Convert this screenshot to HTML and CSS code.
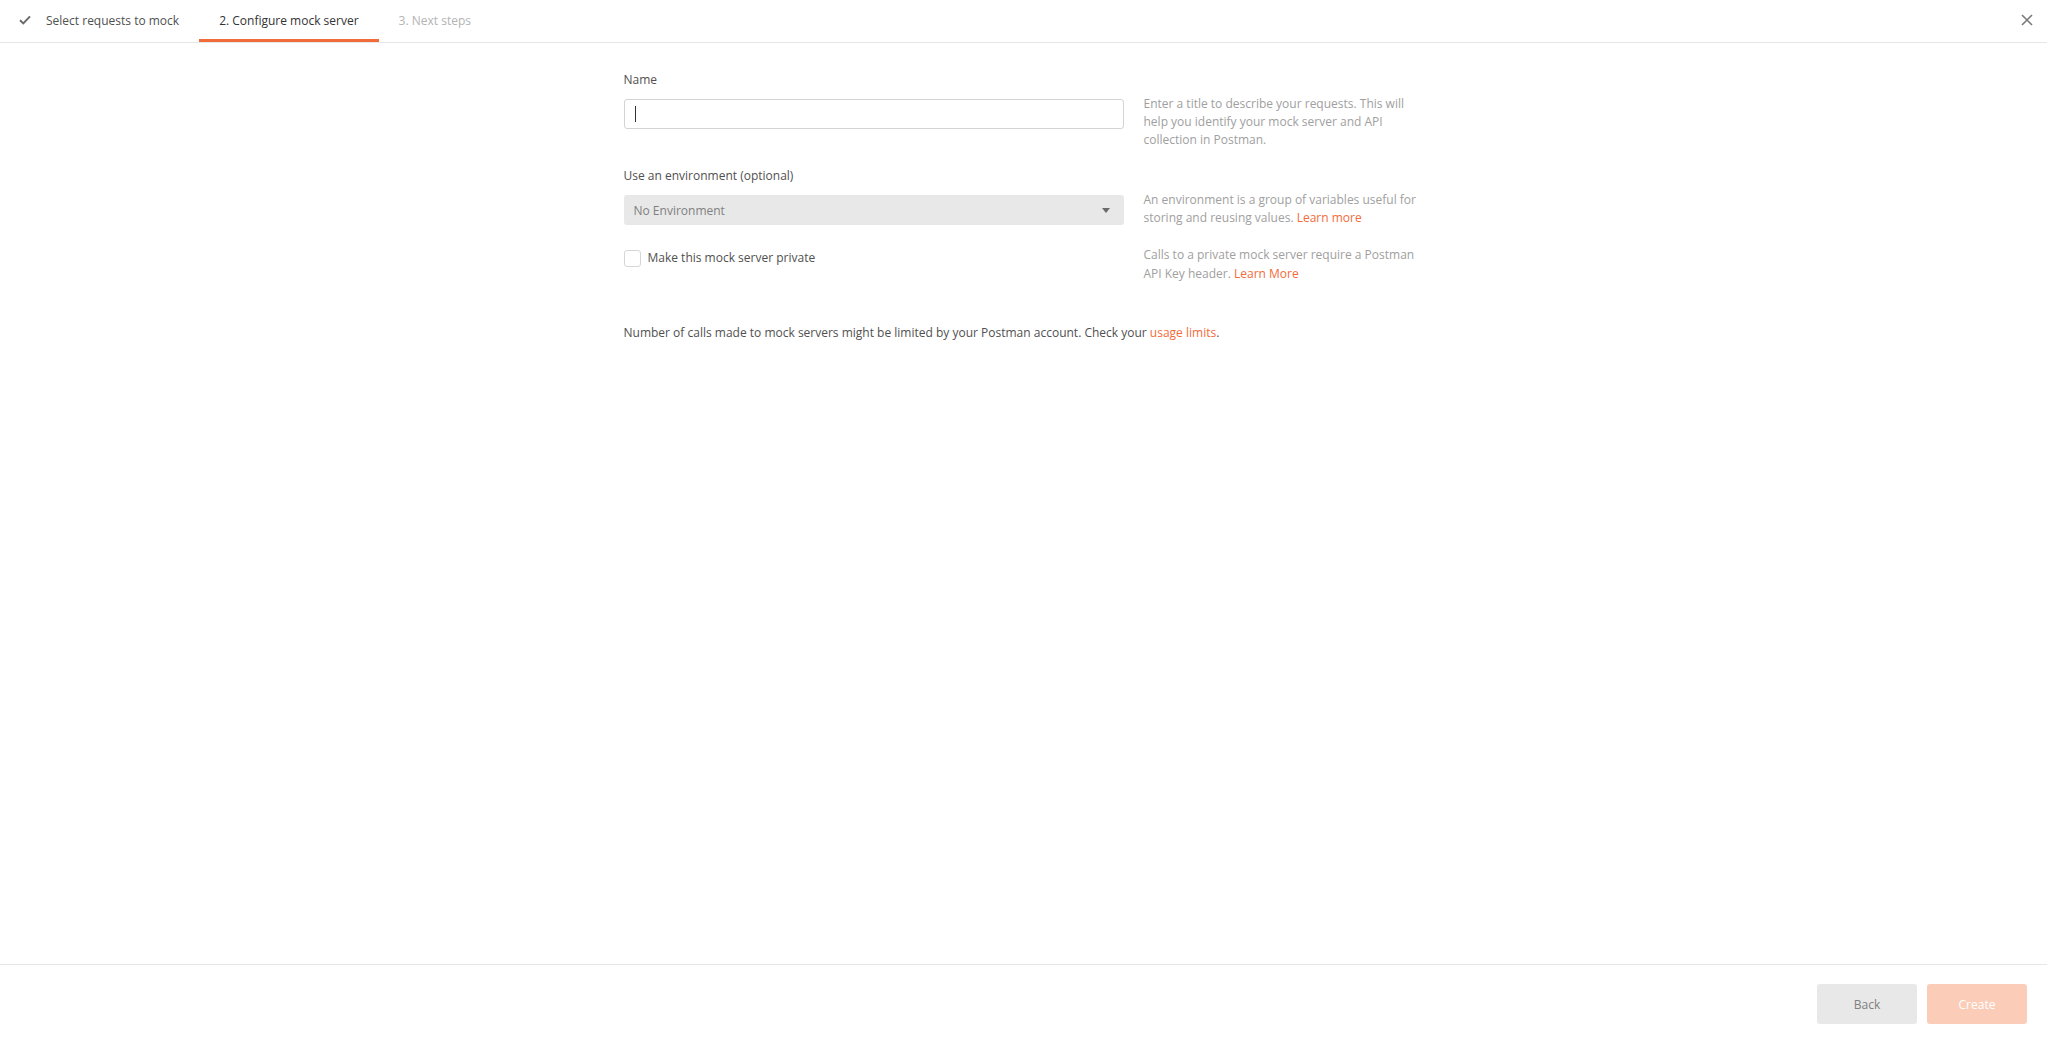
FILE: index.html
```html
<!DOCTYPE html>
<html lang="en">
<head>
<meta charset="utf-8">
<title>Create mock server</title>
<link rel="stylesheet" href="styles.css">
</head>
<body>
<div class="app">
  <header class="header">
    <nav class="tabs">
      <div class="tab tab-done">
        <svg class="check" width="12" height="10" viewBox="0 0 12 10"><path d="M1 5.2 L4.3 8.4 L11 1.4" fill="none" stroke="#6b6b6b" stroke-width="2"/></svg>
        <span>Select requests to mock</span>
      </div>
      <div class="tab tab-active"><span>2. Configure mock server</span></div>
      <div class="tab tab-next"><span>3. Next steps</span></div>
    </nav>
    <button class="close" aria-label="Close">
      <svg width="12" height="12" viewBox="0 0 12 12"><path d="M1 1 L11 11 M11 1 L1 11" stroke="#7a7a7a" stroke-width="1.6" fill="none"/></svg>
    </button>
  </header>

  <main class="main">
    <div class="form">
      <div class="field">
        <div class="label">Name</div>
        <div class="row">
          <div class="control">
            <div class="text-input"><span class="caret"></span></div>
          </div>
          <div class="help">Enter a title to describe your requests. This will help you identify your mock server and API collection in Postman.</div>
        </div>
      </div>

      <div class="field field-env">
        <div class="label">Use an environment (optional)</div>
        <div class="row">
          <div class="control">
            <div class="select">
              <span>No Environment</span>
              <span class="arrow"></span>
            </div>
          </div>
          <div class="help">An environment is a group of variables useful for storing and reusing values. <a class="link" href="#">Learn more</a></div>
        </div>
      </div>

      <div class="field field-private">
        <div class="row">
          <div class="control control-check">
            <span class="checkbox"></span>
            <span class="check-label">Make this mock server private</span>
          </div>
          <div class="help help-private">Calls to a private mock server require a Postman API Key header. <a class="link" href="#">Learn More</a></div>
        </div>
      </div>

      <p class="note">Number of calls made to mock servers might be limited by your Postman account. Check your <a class="link" href="#">usage limits</a>.</p>
    </div>
  </main>

  <footer class="footer">
    <button class="btn btn-back">Back</button>
    <button class="btn btn-create">Create</button>
  </footer>
</div>
</body>
</html>
```

FILE: styles.css
```css
* { box-sizing: border-box; }

html, body {
  margin: 0;
  padding: 0;
  height: 100%;
  background: #ffffff;
}

body {
  font-family: "Open Sans", "Liberation Sans", sans-serif;
  font-size: 12px;
  color: #505050;
}

.app {
  display: flex;
  flex-direction: column;
  height: 100vh;
}

.header {
  display: flex;
  align-items: stretch;
  justify-content: space-between;
  height: 43px;
  border-bottom: 1px solid #e6e6e6;
  padding-right: 14px;
}

.tabs {
  display: flex;
  align-items: stretch;
}

.tab {
  display: flex;
  align-items: center;
  height: 42px;
  padding: 1px 20px 0;
  border-bottom: 3px solid transparent;
  font-size: 12px;
  white-space: nowrap;
}

.tab-done {
  padding-left: 19px;
  color: #505050;
}

.tab-done .check {
  margin-right: 15px;
}

.tab-active {
  color: #333333;
  border-bottom-color: #f26b3a;
}

.tab-next {
  color: #b3b3b3;
}

.close {
  align-self: center;
  margin-top: -2px;
  border: 0;
  background: transparent;
  padding: 0;
  width: 12px;
  height: 12px;
  display: flex;
}

.main {
  flex: 1;
  overflow: hidden;
}

.form {
  width: 800px;
  margin: 0 auto;
  padding-top: 28px;
}

.label {
  line-height: 18px;
  color: #505050;
  margin-bottom: 10px;
}

.field-env {
  margin-top: 18px;
}

.field-private {
  margin-top: 21px;
}

.row {
  display: grid;
  grid-template-columns: 500px 280px;
  column-gap: 20px;
  align-items: start;
}

.help {
  margin-top: -4px;
  font-size: 12px;
  line-height: 18px;
  color: #a0a0a0;
}

.help-private {
  margin-top: -3px;
  line-height: 19.3px;
}

.link {
  color: #f26b3a;
  text-decoration: none;
}

.text-input {
  height: 30px;
  border: 1px solid #d4d4d4;
  border-radius: 3px;
  background: #fff;
  display: flex;
  align-items: center;
  padding-left: 10px;
}

.caret {
  display: block;
  width: 1px;
  height: 16px;
  background: #333;
}

.select {
  height: 30px;
  border-radius: 3px;
  background: #e8e8e8;
  display: flex;
  align-items: center;
  justify-content: space-between;
  padding: 0 14px 0 10px;
  color: #808080;
}

.arrow {
  width: 0;
  height: 0;
  border-left: 4px solid transparent;
  border-right: 4px solid transparent;
  border-top: 5px solid #6b6b6b;
}

.control-check {
  display: flex;
  align-items: center;
  height: 20px;
}

.checkbox {
  width: 17px;
  height: 17px;
  border: 1px solid #d6d6d6;
  border-radius: 3px;
  background: #fff;
  margin-right: 7px;
}

.check-label {
  color: #505050;
  line-height: 18px;
}

.note {
  margin: 40px 0 0;
  line-height: 18px;
  color: #505050;
}

.footer {
  display: flex;
  justify-content: flex-end;
  gap: 10px;
  border-top: 1px solid #e6e6e6;
  padding: 19px 20px 20px;
  height: 80px;
}

.btn {
  width: 100px;
  height: 40px;
  border: 0;
  border-radius: 3px;
  font-family: "Open Sans", "Liberation Sans", sans-serif;
  font-size: 12px;
}

.btn-back {
  background: #e8e8e8;
  color: #808080;
}

.btn-create {
  background: #fbcdb9;
  color: #ffffff;
}
```
